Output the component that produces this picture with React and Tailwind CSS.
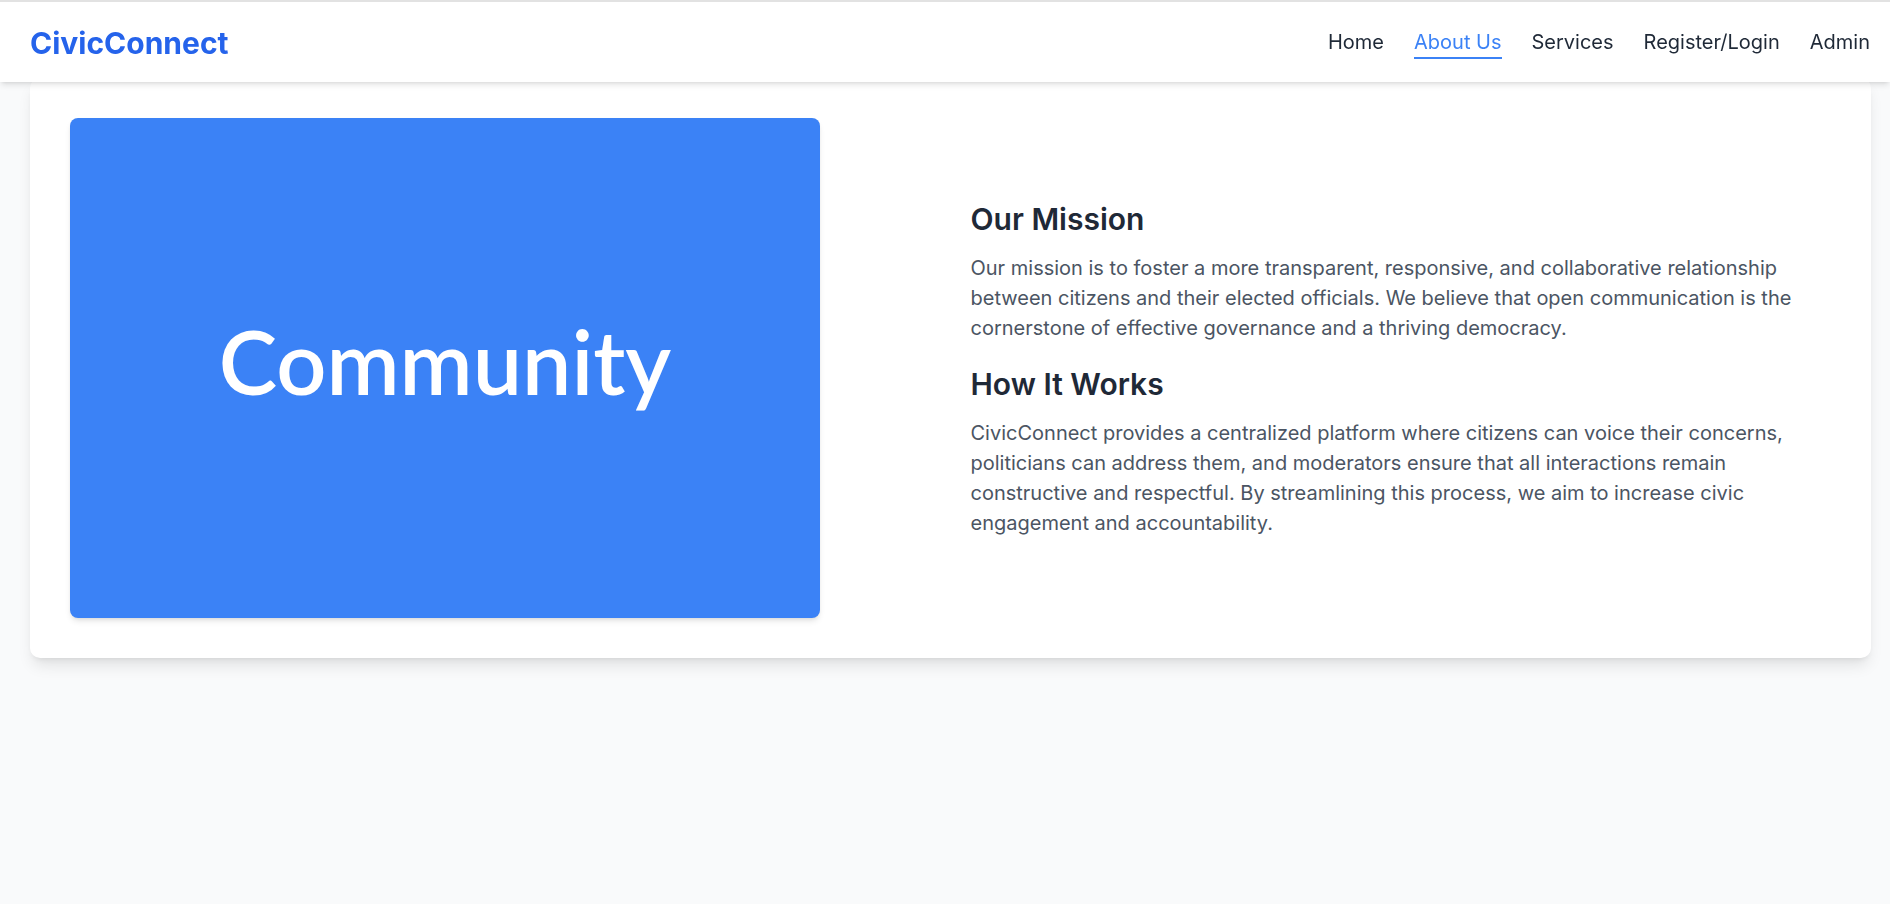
import React from 'react';

const navLinks = ['Home', 'About Us', 'Services', 'Register/Login', 'Admin'];

const Header = () => (
  <header className="fixed top-0 inset-x-0 z-10 h-[82px] bg-white border-t-2 border-[#e2e2e2] shadow-md">
    <div className="h-full flex items-center justify-between pl-[30px] pr-[20px] pt-[2px]">
      <a href="#" className="text-[30px] leading-[36px] font-bold text-[#2563eb]">
        CivicConnect
      </a>
      <nav className="flex items-center gap-[30px] text-[20px] leading-[30px]">
        {navLinks.map((link) => (
          <a
            key={link}
            href="#"
            className={
              link === 'About Us'
                ? 'border-b-2 border-[#3b82f6] text-[#3b82f6]'
                : 'border-b-2 border-transparent text-[#1f2937]'
            }
          >
            {link}
          </a>
        ))}
      </nav>
    </div>
  </header>
);

const App = () => {
  return (
    <div className="min-h-screen bg-[#f9fafb] font-['Inter','Liberation_Sans',sans-serif]">
      <Header />

      <main className="pt-[78px] ml-[30px] mr-[19px]">
        <section className="bg-white rounded-[10px] shadow-lg p-10 grid grid-cols-2 gap-10 items-center">
          {/* Placeholder image */}
          <div className="w-[750px] h-[500px] bg-[#3b82f6] rounded-lg shadow-md flex items-center justify-center">
            <span className="font-['Lato',sans-serif] font-semibold text-[88px] leading-none text-white pb-[14px]">
              Community
            </span>
          </div>

          {/* Text */}
          <div>
            <h2 className="text-[30px] leading-[40px] font-semibold text-[#1f2937] mb-[14px]">
              Our Mission
            </h2>
            <p className="text-[20px] leading-[30px] text-[#4b5563] mb-[21px]">
              Our mission is to foster a more transparent, responsive, and collaborative relationship
              between citizens and their elected officials. We believe that open communication is the
              cornerstone of effective governance and a thriving democracy.
            </p>
            <h2 className="text-[30px] leading-[40px] font-semibold text-[#1f2937] mb-[14px]">
              How It Works
            </h2>
            <p className="text-[20px] leading-[30px] text-[#4b5563]">
              CivicConnect provides a centralized platform where citizens can voice their concerns,
              politicians can address them, and moderators ensure that all interactions remain
              constructive and respectful. By streamlining this process, we aim to increase civic
              engagement and accountability.
            </p>
          </div>
        </section>
      </main>
    </div>
  );
};

export default App;
